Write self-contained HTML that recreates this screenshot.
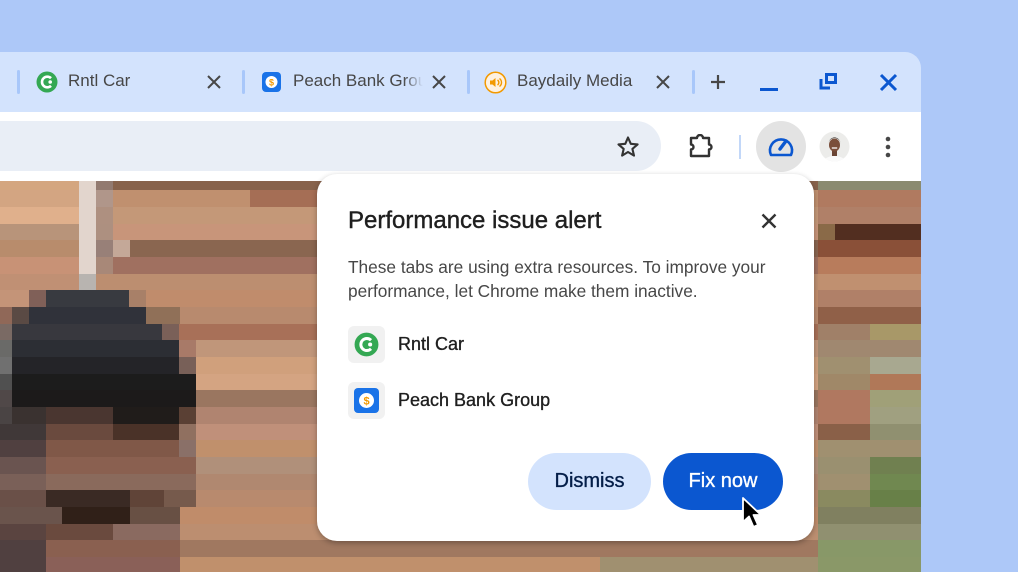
<!DOCTYPE html>
<html><head><meta charset="utf-8"><style>
*{margin:0;padding:0;box-sizing:border-box}
body{width:1018px;height:572px;overflow:hidden;background:#adc8f8;font-family:"Liberation Sans",Arial,sans-serif;position:relative}
.win{position:absolute;left:0;top:52px;width:921px;height:520px;background:#d3e3fd;border-top-right-radius:16px;overflow:hidden}
.sep{position:absolute;top:18px;width:3px;height:24px;background:#a8c7fa;border-radius:2px}
.tt{position:absolute;top:19px;font-size:17px;color:#474747;white-space:nowrap}
.toolbar{position:absolute;left:0;top:60px;width:921px;height:69px;background:#fff}
.omni{position:absolute;left:0;top:9px;width:661px;height:50px;background:#e9eef6;border-radius:0 25px 25px 0}
.content{position:absolute;left:0;top:129px;width:921px;height:391px}
.dlg{position:absolute;left:317px;top:174px;width:497px;height:367px;background:#fff;border-radius:20px;box-shadow:0 2px 6px rgba(0,0,0,.3)}
.title{position:absolute;left:31px;top:33px;font-size:24px;color:#1f1f1f;-webkit-text-stroke:0.4px #1f1f1f}
.body{position:absolute;left:31px;top:81px;font-size:17.3px;line-height:24px;color:#474747;width:460px}
.row{position:absolute;left:31px;width:37px;height:37px;background:#f1f1f1;border-radius:6px}
.rl{position:absolute;left:81px;font-size:18px;color:#1f1f1f;-webkit-text-stroke:0.35px #1f1f1f}
.btn{position:absolute;top:279px;height:57px;border-radius:29px;font-size:20px;text-align:center;line-height:57px}
</style></head><body>
<div class="win">
  <div class="sep" style="left:17px"></div>
  <div class="sep" style="left:242px"></div>
  <div class="sep" style="left:467px"></div>
  <div class="sep" style="left:692px"></div>
  <svg style="position:absolute;left:36px;top:19px" width="22" height="22" viewBox="0 0 22 22"><circle cx="11" cy="11" r="10.5" fill="#34a853"/><path d="M15 7.2A5.3 5.3 0 1 0 15 14.8" stroke="#fff" stroke-width="2.6" fill="none"/><circle cx="14.2" cy="11" r="1.8" fill="#fff"/></svg>
  <div class="tt" style="left:68px">Rntl Car</div>
  <svg style="position:absolute;left:207px;top:23px" width="14" height="14"><path d="M1 1L13 13M13 1L1 13" stroke="#474747" stroke-width="2"/></svg>
  <svg style="position:absolute;left:262px;top:20px" width="19" height="20"><rect width="19" height="20" rx="4" fill="#1a73e8"/><circle cx="9.5" cy="10" r="6" fill="#fff"/><text x="9.5" y="13.5" font-size="9" font-weight="bold" fill="#f29900" text-anchor="middle" font-family="Liberation Sans">$</text></svg>
  <div class="tt" style="left:293px;width:130px;overflow:hidden;-webkit-mask-image:linear-gradient(90deg,#000 85%,transparent)">Peach Bank Group</div>
  <svg style="position:absolute;left:432px;top:23px" width="14" height="14"><path d="M1 1L13 13M13 1L1 13" stroke="#474747" stroke-width="2"/></svg>
  <svg style="position:absolute;left:484px;top:19px" width="23" height="23" viewBox="0 0 23 23"><circle cx="11.5" cy="11.5" r="10.3" fill="#fef1e0" stroke="#f29900" stroke-width="1.5"/><path d="M6 9.5h2.5l3-2.5v9l-3-2.5H6z" fill="#f29900"/><path d="M13.5 9a3 3 0 0 1 0 5M15.5 7.5a5 5 0 0 1 0 8" stroke="#f29900" stroke-width="1.4" fill="none"/></svg>
  <div class="tt" style="left:517px">Baydaily Media</div>
  <svg style="position:absolute;left:656px;top:23px" width="14" height="14"><path d="M1 1L13 13M13 1L1 13" stroke="#474747" stroke-width="2"/></svg>
  <svg style="position:absolute;left:710px;top:22px" width="16" height="16"><path d="M8 1V15M1 8H15" stroke="#474747" stroke-width="2.2"/></svg>
  <div style="position:absolute;left:760px;top:36px;width:18px;height:3px;background:#0b57d0"></div>
  <svg style="position:absolute;left:819px;top:20px" width="19" height="19"><path d="M2 7v9h9" stroke="#0b57d0" stroke-width="3" fill="none"/><rect x="7.5" y="2.5" width="9" height="8" stroke="#0b57d0" stroke-width="3" fill="none"/></svg>
  <svg style="position:absolute;left:879px;top:21px" width="19" height="19"><path d="M2 2L17 17M17 2L2 17" stroke="#0b57d0" stroke-width="3"/></svg>

  <div class="toolbar">
    <div class="omni"></div>
    <svg style="position:absolute;left:616px;top:23px" width="24" height="24" viewBox="0 0 24 24"><path d="M12 2.5l2.8 6.3 6.8.6-5.2 4.5 1.6 6.7L12 17l-5.9 3.6 1.6-6.7-5.2-4.5 6.8-.6z" fill="none" stroke="#333" stroke-width="2.1" stroke-linejoin="round"/></svg>
    <svg style="position:absolute;left:688px;top:22px" width="26" height="25" viewBox="0 0 26 25"><path d="M3 4h6a3 3 0 0 1 6 0h6v6.5a2.5 2.5 0 0 1 0 5V22H3v-6.5a2.5 2.5 0 0 0 0-5z" fill="none" stroke="#333" stroke-width="2.4" stroke-linejoin="round"/></svg>
    <div style="position:absolute;left:739px;top:23px;width:2px;height:24px;background:#c2d7f8"></div>
    <div style="position:absolute;left:756px;top:9px;width:50px;height:51px;border-radius:50%;background:#e3e3e3"></div>
    <svg style="position:absolute;left:767px;top:21px" width="28" height="26" viewBox="0 0 28 26"><path d="M4 22A11 11 0 1 1 24 22Z" fill="none" stroke="#0b57d0" stroke-width="2.6" stroke-linejoin="round"/><path d="M13 16L19 8" stroke="#0b57d0" stroke-width="3.4" stroke-linecap="round"/></svg>
    <svg style="position:absolute;left:819px;top:19px" width="31" height="31" viewBox="0 0 31 31"><defs><clipPath id="c"><circle cx="15.5" cy="15.5" r="15"/></clipPath></defs><g clip-path="url(#c)"><rect width="31" height="31" fill="#ececea"/><ellipse cx="15.5" cy="34" rx="13" ry="9" fill="#fafafa"/><rect x="13" y="19" width="5" height="6" fill="#6b4535"/><ellipse cx="15.5" cy="14" rx="5.5" ry="6.5" fill="#7a4e3a"/><path d="M9.5 13a6 6 0 0 1 12 0c0-3-2-6.5-6-6.5s-6 3.5-6 6.5z" fill="#1d1512"/><path d="M12.8 17h5.4" stroke="#fff" stroke-width="1.3"/></g></svg>
    <svg style="position:absolute;left:884px;top:24px" width="8" height="22"><circle cx="4" cy="3" r="2.3" fill="#474747"/><circle cx="4" cy="11" r="2.3" fill="#474747"/><circle cx="4" cy="19" r="2.3" fill="#474747"/></svg>
  </div>

  <svg class="content" width="921" height="391" viewBox="0 0 921 391" shape-rendering="crispEdges">
    <rect x="0" y="0" width="921" height="10" fill="#87624b"/><rect x="0" y="0" width="79" height="10" fill="#d4a67f"/><rect x="79" y="0" width="17" height="10" fill="#e2d5cd"/><rect x="96" y="0" width="17" height="10" fill="#927a70"/><rect x="818" y="0" width="103" height="10" fill="#8a8a70"/>
    <rect x="0" y="9" width="921" height="17" fill="#c0906f"/><rect x="0" y="9" width="79" height="17" fill="#d3a582"/><rect x="79" y="9" width="17" height="17" fill="#e2d5cd"/><rect x="96" y="9" width="17" height="17" fill="#b0968a"/><rect x="250" y="9" width="70" height="17" fill="#a56e55"/><rect x="818" y="9" width="103" height="17" fill="#b07a60"/>
    <rect x="0" y="26" width="921" height="17" fill="#c49878"/><rect x="0" y="26" width="79" height="17" fill="#e0b08c"/><rect x="79" y="26" width="17" height="17" fill="#e2d5cd"/><rect x="96" y="26" width="17" height="17" fill="#ae9080"/><rect x="818" y="26" width="103" height="17" fill="#b08068"/>
    <rect x="0" y="43" width="921" height="17" fill="#c8957a"/><rect x="0" y="43" width="79" height="17" fill="#b8947a"/><rect x="79" y="43" width="17" height="17" fill="#e2d5cd"/><rect x="96" y="43" width="17" height="17" fill="#ad9080"/><rect x="818" y="43" width="103" height="17" fill="#522e20"/><rect x="818" y="43" width="17" height="17" fill="#8a6a48"/>
    <rect x="0" y="59" width="921" height="17" fill="#8a6650"/><rect x="0" y="59" width="79" height="17" fill="#b88c6c"/><rect x="79" y="59" width="17" height="17" fill="#e2d5cd"/><rect x="96" y="59" width="17" height="17" fill="#988078"/><rect x="113" y="59" width="17" height="17" fill="#c4a898"/><rect x="818" y="59" width="103" height="17" fill="#8a5038"/>
    <rect x="0" y="76" width="921" height="17" fill="#a07060"/><rect x="0" y="76" width="79" height="17" fill="#c89276"/><rect x="79" y="76" width="17" height="17" fill="#e2d5cd"/><rect x="96" y="76" width="17" height="17" fill="#a88878"/><rect x="818" y="76" width="103" height="17" fill="#b87c5c"/>
    <rect x="0" y="93" width="921" height="17" fill="#bc8e70"/><rect x="0" y="93" width="79" height="17" fill="#c09074"/><rect x="79" y="93" width="17" height="17" fill="#b8b4b0"/><rect x="818" y="93" width="103" height="17" fill="#c09070"/>
    <rect x="0" y="109" width="921" height="17" fill="#c08c6c"/><rect x="0" y="109" width="29" height="17" fill="#c49478"/><rect x="29" y="109" width="17" height="17" fill="#806058"/><rect x="46" y="109" width="83" height="17" fill="#383a40"/><rect x="129" y="109" width="17" height="17" fill="#a88068"/><rect x="818" y="109" width="103" height="17" fill="#b08068"/>
    <rect x="0" y="126" width="921" height="17" fill="#b88a6e"/><rect x="0" y="126" width="12" height="17" fill="#906858"/><rect x="12" y="126" width="17" height="17" fill="#5a4a44"/><rect x="29" y="126" width="117" height="17" fill="#30323a"/><rect x="146" y="126" width="34" height="17" fill="#907058"/><rect x="818" y="126" width="103" height="17" fill="#906048"/>
    <rect x="0" y="143" width="921" height="17" fill="#a87058"/><rect x="0" y="143" width="12" height="17" fill="#7a6a64"/><rect x="12" y="143" width="150" height="17" fill="#38383e"/><rect x="162" y="143" width="17" height="17" fill="#7a6058"/><rect x="818" y="143" width="103" height="17" fill="#a08068"/><rect x="870" y="143" width="51" height="17" fill="#a89868"/>
    <rect x="0" y="159" width="921" height="17" fill="#c0967a"/><rect x="0" y="159" width="12" height="17" fill="#6a6a68"/><rect x="12" y="159" width="167" height="17" fill="#2c2e34"/><rect x="179" y="159" width="17" height="17" fill="#a87a68"/><rect x="818" y="159" width="103" height="17" fill="#a08870"/>
    <rect x="0" y="176" width="921" height="17" fill="#d0a07c"/><rect x="0" y="176" width="12" height="17" fill="#707070"/><rect x="12" y="176" width="167" height="17" fill="#242428"/><rect x="179" y="176" width="17" height="17" fill="#786058"/><rect x="818" y="176" width="103" height="17" fill="#a09070"/><rect x="870" y="176" width="51" height="17" fill="#a8a890"/>
    <rect x="0" y="193" width="921" height="17" fill="#d4a482"/><rect x="0" y="193" width="12" height="17" fill="#505050"/><rect x="12" y="193" width="184" height="17" fill="#1c1c1c"/><rect x="818" y="193" width="103" height="17" fill="#a08868"/><rect x="870" y="193" width="51" height="17" fill="#b07858"/>
    <rect x="0" y="209" width="921" height="17" fill="#9a7660"/><rect x="0" y="209" width="12" height="17" fill="#504848"/><rect x="12" y="209" width="184" height="17" fill="#1c1a1a"/><rect x="818" y="209" width="103" height="17" fill="#b07860"/><rect x="870" y="209" width="51" height="17" fill="#a0a078"/>
    <rect x="0" y="226" width="921" height="17" fill="#b08470"/><rect x="0" y="226" width="12" height="17" fill="#4a4444"/><rect x="12" y="226" width="34" height="17" fill="#3a3230"/><rect x="46" y="226" width="67" height="17" fill="#4a3630"/><rect x="113" y="226" width="67" height="17" fill="#201c1a"/><rect x="179" y="226" width="17" height="17" fill="#5a4034"/><rect x="818" y="226" width="103" height="17" fill="#b07860"/><rect x="870" y="226" width="51" height="17" fill="#a0a080"/>
    <rect x="0" y="243" width="921" height="17" fill="#c0907a"/><rect x="0" y="243" width="46" height="17" fill="#403838"/><rect x="46" y="243" width="67" height="17" fill="#6a4a3e"/><rect x="113" y="243" width="67" height="17" fill="#4a3228"/><rect x="179" y="243" width="17" height="17" fill="#907060"/><rect x="818" y="243" width="103" height="17" fill="#8a6048"/><rect x="870" y="243" width="51" height="17" fill="#909070"/>
    <rect x="0" y="259" width="921" height="17" fill="#c0906c"/><rect x="0" y="259" width="46" height="17" fill="#504040"/><rect x="46" y="259" width="134" height="17" fill="#805848"/><rect x="179" y="259" width="17" height="17" fill="#8a7068"/><rect x="818" y="259" width="103" height="17" fill="#a09070"/>
    <rect x="0" y="276" width="921" height="17" fill="#b0907a"/><rect x="0" y="276" width="46" height="17" fill="#6a5450"/><rect x="46" y="276" width="150" height="17" fill="#8a6050"/><rect x="818" y="276" width="103" height="17" fill="#9a9070"/><rect x="870" y="276" width="51" height="17" fill="#708050"/>
    <rect x="0" y="293" width="921" height="17" fill="#b08870"/><rect x="0" y="293" width="46" height="17" fill="#7a6058"/><rect x="46" y="293" width="150" height="17" fill="#8a6a5c"/><rect x="818" y="293" width="103" height="17" fill="#a09070"/><rect x="870" y="293" width="51" height="17" fill="#708850"/>
    <rect x="0" y="309" width="921" height="17" fill="#b88a6e"/><rect x="0" y="309" width="46" height="17" fill="#6a5048"/><rect x="46" y="309" width="84" height="17" fill="#3a2a24"/><rect x="130" y="309" width="34" height="17" fill="#604438"/><rect x="164" y="309" width="32" height="17" fill="#765a4c"/><rect x="818" y="309" width="103" height="17" fill="#8a8a60"/><rect x="870" y="309" width="51" height="17" fill="#688048"/>
    <rect x="0" y="326" width="921" height="17" fill="#c08c6a"/><rect x="0" y="326" width="62" height="17" fill="#6a544c"/><rect x="62" y="326" width="68" height="17" fill="#302018"/><rect x="130" y="326" width="50" height="17" fill="#685044"/><rect x="818" y="326" width="103" height="17" fill="#808060"/>
    <rect x="0" y="343" width="921" height="17" fill="#bc8e70"/><rect x="0" y="343" width="46" height="17" fill="#5a4440"/><rect x="46" y="343" width="67" height="17" fill="#6a4a3e"/><rect x="113" y="343" width="67" height="17" fill="#8a6a60"/><rect x="818" y="343" width="103" height="17" fill="#909070"/>
    <rect x="0" y="359" width="921" height="17" fill="#a07860"/><rect x="0" y="359" width="46" height="17" fill="#504040"/><rect x="46" y="359" width="134" height="17" fill="#8a6050"/><rect x="818" y="359" width="103" height="17" fill="#889868"/>
    <rect x="0" y="376" width="921" height="17" fill="#c0906c"/><rect x="0" y="376" width="46" height="17" fill="#504040"/><rect x="46" y="376" width="134" height="17" fill="#8a6058"/><rect x="600" y="376" width="218" height="17" fill="#a09070"/><rect x="818" y="376" width="103" height="17" fill="#8a9868"/>
  </svg>
</div>

<div class="dlg">
  <div class="title">Performance issue alert</div>
  <svg style="position:absolute;left:444px;top:39px" width="16" height="16"><path d="M1.5 1.5L14.5 14.5M14.5 1.5L1.5 14.5" stroke="#333" stroke-width="2.4"/></svg>
  <div class="body">These tabs are using extra resources. To improve your performance, let Chrome make them inactive.</div>
  <div class="row" style="top:152px"><svg style="position:absolute;left:6px;top:6px" width="25" height="25" viewBox="0 0 22 22"><circle cx="11" cy="11" r="10.5" fill="#34a853"/><path d="M15 7.2A5.3 5.3 0 1 0 15 14.8" stroke="#fff" stroke-width="2.6" fill="none"/><circle cx="14.2" cy="11" r="1.8" fill="#fff"/></svg></div>
  <div class="rl" style="top:160px">Rntl Car</div>
  <div class="row" style="top:208px"><svg style="position:absolute;left:6px;top:6px" width="25" height="25"><rect width="25" height="25" rx="4" fill="#1a73e8"/><circle cx="12.5" cy="12.5" r="7.5" fill="#fff"/><text x="12.5" y="16.5" font-size="11" font-weight="bold" fill="#f29900" text-anchor="middle" font-family="Liberation Sans">$</text></svg></div>
  <div class="rl" style="top:216px">Peach Bank Group</div>
  <div class="btn" style="left:211px;width:123px;background:#d3e3fd;color:#041e49;-webkit-text-stroke:0.35px #041e49">Dismiss</div>
  <div class="btn" style="left:346px;width:120px;background:#0b57d0;color:#fff;-webkit-text-stroke:0.35px #fff">Fix now</div>
</div>
<svg style="position:absolute;left:741px;top:496px" width="24" height="34" viewBox="0 0 24 34"><path d="M2 2V26L8 20.5L12.5 31L17 29L12.5 19H20Z" fill="#000" stroke="#fff" stroke-width="1.8" stroke-linejoin="round"/></svg>
</body></html>
